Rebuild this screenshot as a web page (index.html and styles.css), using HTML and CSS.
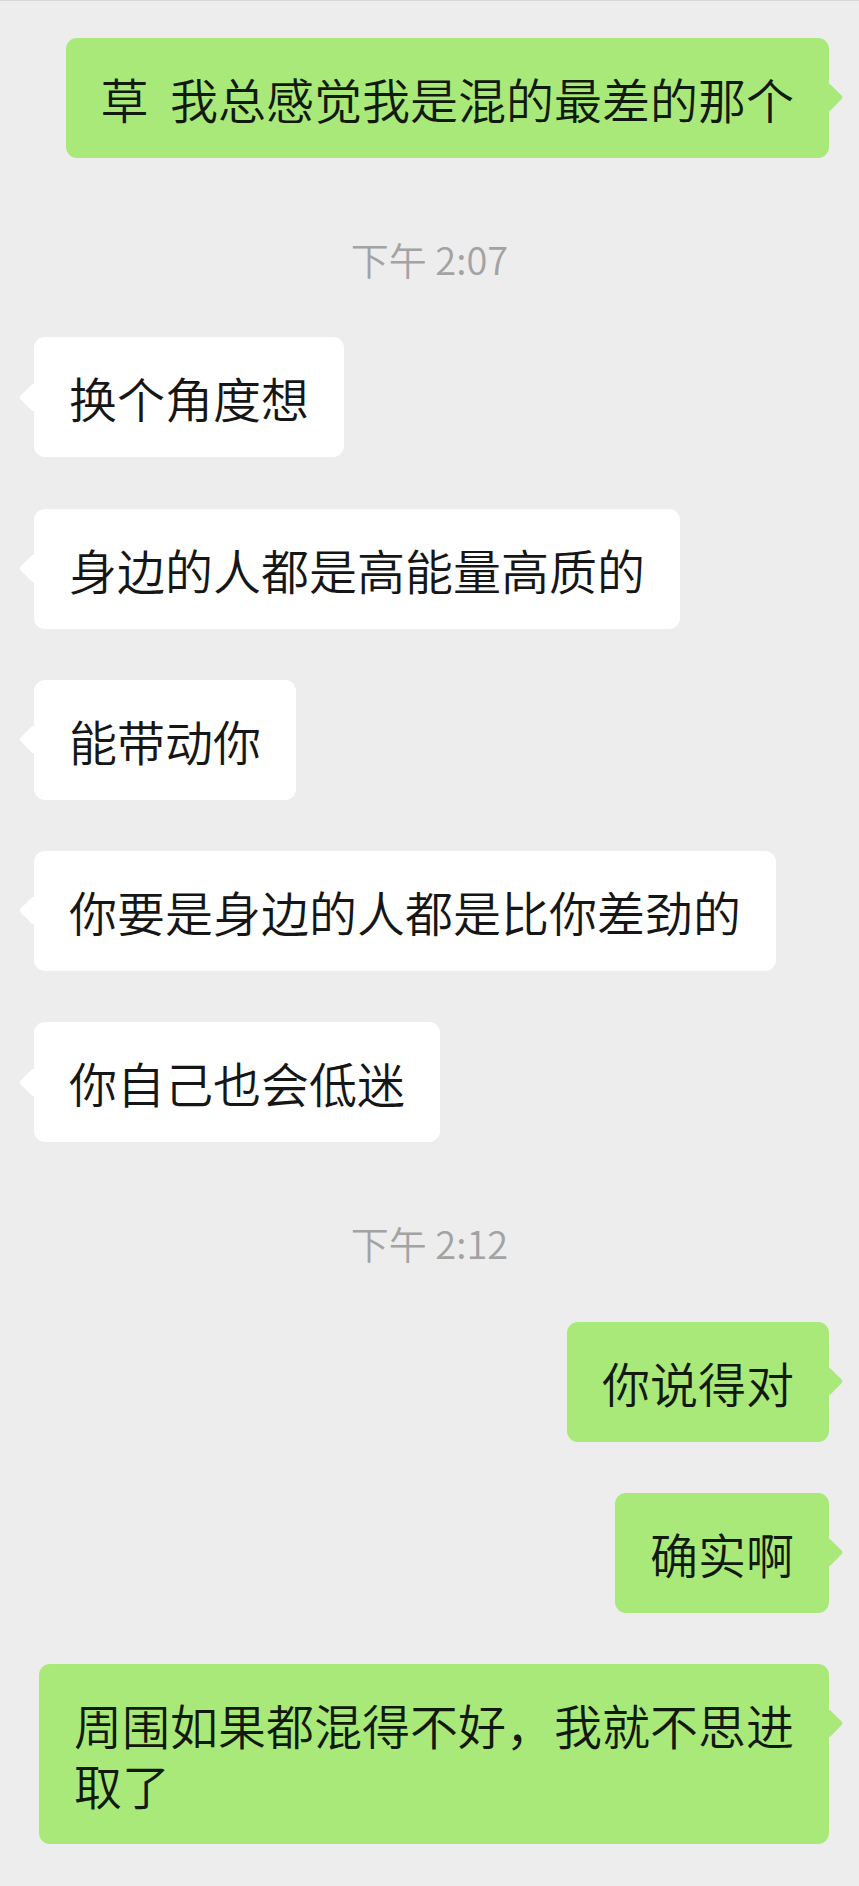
FILE: index.html
```html
<!DOCTYPE html>
<html lang="zh-CN">
<head>
<meta charset="utf-8">
<title>聊天</title>
<link rel="stylesheet" href="styles.css">
</head>
<body>
<div class="chat">
  <div class="row right"><div class="bubble green"><span class="pre">草  我总感觉我是混的最差的那个</span></div></div>
  <div class="time">下午 2:07</div>
  <div class="row left"><div class="bubble white">换个角度想</div></div>
  <div class="row left"><div class="bubble white">身边的人都是高能量高质的</div></div>
  <div class="row left"><div class="bubble white">能带动你</div></div>
  <div class="row left"><div class="bubble white">你要是身边的人都是比你差劲的</div></div>
  <div class="row left"><div class="bubble white">你自己也会低迷</div></div>
  <div class="time">下午 2:12</div>
  <div class="row right"><div class="bubble green">你说得对</div></div>
  <div class="row right"><div class="bubble green">确实啊</div></div>
  <div class="row right wide"><div class="bubble green">周围如果都混得不好，我就不思进取了</div></div>
</div>
</body>
</html>
```
FILE: styles.css
```css
* { box-sizing: border-box; }
html, body {
  margin: 0;
  padding: 0;
  background: #ededed;
}
body {
  width: 859px;
  min-height: 1886px;
  border-top: 1px solid #d9d9d9;
  font-family: "Noto Sans CJK SC", "Noto Sans", sans-serif;
}
.chat {
  display: flex;
  flex-direction: column;
  gap: 51.2px;
  padding-top: 37px;
  padding-bottom: 40px;
}
.row {
  display: flex;
}
.row.left {
  justify-content: flex-start;
  padding-left: 34px;
  padding-right: 60px;
}
.row.right {
  justify-content: flex-end;
  padding-right: 30px;
  padding-left: 39px;
}
.bubble {
  position: relative;
  font-size: 48px;
  font-weight: 350;
  line-height: 60px;
  padding: 30px 35px;
  border-radius: 11px;
  color: #161616;
}
.pre { white-space: pre; }
.bubble.white { background: #ffffff; }
.bubble.green { background: #a9e97a; color: #111a0c; }
.bubble::before {
  content: "";
  position: absolute;
  top: 49.4px;
  width: 21.2px;
  height: 21.2px;
  transform: rotate(45deg);
  border-radius: 3px;
}
.bubble.white::before {
  left: -10.6px;
  background: #ffffff;
}
.bubble.green::before {
  right: -10.6px;
  background: #a9e97a;
}
.time {
  text-align: center;
  font-size: 38px;
  font-weight: 350;
  line-height: 40px;
  color: #a3a3a3;
  margin: 30px 0 7px;
}
```
